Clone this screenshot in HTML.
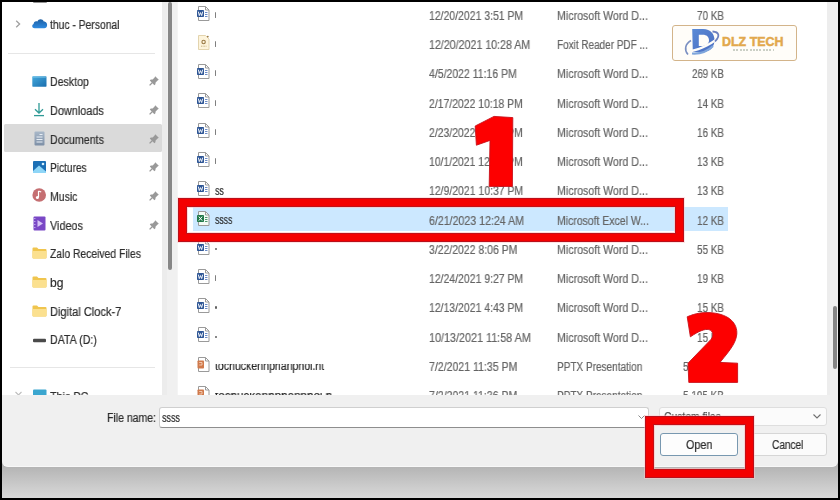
<!DOCTYPE html>
<html><head><meta charset="utf-8"><style>
html,body{margin:0;padding:0;}
body{width:840px;height:500px;overflow:hidden;background:#000;position:relative;font-family:"Liberation Sans",sans-serif;font-size:12px;color:#262626;}
.a{position:absolute;}
.t{position:absolute;white-space:nowrap;line-height:14px;height:14px;will-change:transform;-webkit-text-stroke:0.2px currentColor;}
.sep{position:absolute;height:1px;background:#e6e6e6;}
.redbox{position:absolute;border:7px solid #f40000;box-sizing:border-box;box-shadow:0 0 0 1px #b8101c,inset 0 0 0 1px #c01018,0 0 0 2px rgba(255,200,200,.5),inset 0 0 0 2px rgba(255,190,190,.6);}
</style></head><body>
<div class="a" style="left:2px;top:2px;width:836px;height:394px;background:#fff"></div>
<div class="a" style="left:162px;top:2px;width:16px;height:394px;background:linear-gradient(90deg,#ececec 0,#ececec 5px,#f0f0f0 5px,#f0f0f0 15px,#f8f8f8 16px)"></div>
<div class="a" style="left:168px;top:2px;width:4px;height:268px;background:#878787;border-radius:2px"></div>
<div class="a" style="left:827px;top:2px;width:11px;height:394px;background:linear-gradient(90deg,#ededed 0,#ededed 3px,#f0f0f0 3px)"></div>
<div class="a" style="left:833px;top:306px;width:4px;height:63px;background:#878787;border-radius:2px"></div>
<div class="a" style="left:4px;top:124px;width:157.5px;height:28px;background:#dadada;border-radius:1.5px"></div>
<div class="sep" style="left:8px;top:53px;width:147px"></div>
<div class="sep" style="left:10px;top:367px;width:145px"></div>
<svg class="a" style="left:14px;top:19px;" width="8" height="10" viewBox="0 0 8 10"><path d="M2.2 1.8 L5.6 5 L2.2 8.2" fill="none" stroke="#a0a0a0" stroke-width="1.3"/></svg>
<svg class="a" style="left:31px;top:17px;" width="17" height="13" viewBox="0 0 17 13"><defs><linearGradient id="cg" x1="0" y1="0" x2="0" y2="1"><stop offset="0" stop-color="#1c5fa3"/><stop offset="1" stop-color="#2e8ae0"/></linearGradient></defs><path d="M3.6 11.2 C1 11.2 0.4 8 2.6 7 C2.6 4.6 4.6 3.6 6.4 4.4 C7.6 1.6 11.6 1.4 12.8 4.6 C15.2 4.6 16.6 6.8 16 9 C15.6 10.5 14.6 11.2 13.4 11.2 Z" fill="url(#cg)"/></svg>
<div class="t" style="top:17.50px;font-size:12px;left:49.60px;transform:scaleX(0.8618);transform-origin:0 50%;color:#2e2e2e;">thuc - Personal</div>
<div class="t" style="top:74.50px;font-size:12px;left:50.30px;transform:scaleX(0.883);transform-origin:0 50%;color:#2e2e2e;">Desktop</div>
<svg class="a" style="left:148px;top:75px;" width="12" height="12" viewBox="0 0 12 12"><path d="M7.2 1.2 L10.8 4.8 L9.6 5.4 L7.6 7.4 L7.4 9.2 L6.4 10.2 L1.8 5.6 L2.8 4.6 L4.6 4.4 L6.6 2.4 Z" fill="#999"/><path d="M4.2 7.8 L1.6 10.4" stroke="#999" stroke-width="1.3"/></svg>
<div class="t" style="top:103.50px;font-size:12px;left:50.00px;transform:scaleX(0.9074);transform-origin:0 50%;color:#2e2e2e;">Downloads</div>
<svg class="a" style="left:148px;top:104px;" width="12" height="12" viewBox="0 0 12 12"><path d="M7.2 1.2 L10.8 4.8 L9.6 5.4 L7.6 7.4 L7.4 9.2 L6.4 10.2 L1.8 5.6 L2.8 4.6 L4.6 4.4 L6.6 2.4 Z" fill="#999"/><path d="M4.2 7.8 L1.6 10.4" stroke="#999" stroke-width="1.3"/></svg>
<div class="t" style="top:132.50px;font-size:12px;left:50.00px;transform:scaleX(0.888);transform-origin:0 50%;color:#2e2e2e;">Documents</div>
<svg class="a" style="left:148px;top:133px;" width="12" height="12" viewBox="0 0 12 12"><path d="M7.2 1.2 L10.8 4.8 L9.6 5.4 L7.6 7.4 L7.4 9.2 L6.4 10.2 L1.8 5.6 L2.8 4.6 L4.6 4.4 L6.6 2.4 Z" fill="#999"/><path d="M4.2 7.8 L1.6 10.4" stroke="#999" stroke-width="1.3"/></svg>
<div class="t" style="top:160.50px;font-size:12px;left:50.00px;transform:scaleX(0.8453);transform-origin:0 50%;color:#2e2e2e;">Pictures</div>
<svg class="a" style="left:148px;top:161px;" width="12" height="12" viewBox="0 0 12 12"><path d="M7.2 1.2 L10.8 4.8 L9.6 5.4 L7.6 7.4 L7.4 9.2 L6.4 10.2 L1.8 5.6 L2.8 4.6 L4.6 4.4 L6.6 2.4 Z" fill="#999"/><path d="M4.2 7.8 L1.6 10.4" stroke="#999" stroke-width="1.3"/></svg>
<div class="t" style="top:189.50px;font-size:12px;left:50.00px;transform:scaleX(0.8754);transform-origin:0 50%;color:#2e2e2e;">Music</div>
<svg class="a" style="left:148px;top:190px;" width="12" height="12" viewBox="0 0 12 12"><path d="M7.2 1.2 L10.8 4.8 L9.6 5.4 L7.6 7.4 L7.4 9.2 L6.4 10.2 L1.8 5.6 L2.8 4.6 L4.6 4.4 L6.6 2.4 Z" fill="#999"/><path d="M4.2 7.8 L1.6 10.4" stroke="#999" stroke-width="1.3"/></svg>
<div class="t" style="top:218.50px;font-size:12px;left:50.00px;transform:scaleX(0.9014);transform-origin:0 50%;color:#2e2e2e;">Videos</div>
<svg class="a" style="left:148px;top:219px;" width="12" height="12" viewBox="0 0 12 12"><path d="M7.2 1.2 L10.8 4.8 L9.6 5.4 L7.6 7.4 L7.4 9.2 L6.4 10.2 L1.8 5.6 L2.8 4.6 L4.6 4.4 L6.6 2.4 Z" fill="#999"/><path d="M4.2 7.8 L1.6 10.4" stroke="#999" stroke-width="1.3"/></svg>
<div class="t" style="top:246.50px;font-size:12px;left:50.00px;transform:scaleX(0.8624);transform-origin:0 50%;color:#2e2e2e;">Zalo Received Files</div>
<div class="t" style="top:275.50px;font-size:12px;left:50.00px;transform:scaleX(1.0075);transform-origin:0 50%;color:#2e2e2e;">bg</div>
<div class="t" style="top:304.50px;font-size:12px;left:50.00px;transform:scaleX(0.9212);transform-origin:0 50%;color:#2e2e2e;">Digital Clock-7</div>
<div class="t" style="top:332.50px;font-size:12px;left:50.00px;transform:scaleX(0.8847);transform-origin:0 50%;color:#2e2e2e;">DATA (D:)</div>
<div class="t" style="top:390.00px;font-size:12px;left:50.00px;transform:scaleX(0.8993);transform-origin:0 50%;color:#2e2e2e;">This PC</div>
<div class="a" style="left:33px;top:2px;width:14px;height:1.2px;background:#777;border-radius:0 0 3px 3px;opacity:.8"></div>
<svg class="a" style="left:32px;top:76px;" width="15" height="11" viewBox="0 0 15 11"><defs><linearGradient id="dg" x1="0" y1="0" x2="1" y2="1"><stop offset="0" stop-color="#44a9dc"/><stop offset="1" stop-color="#1a6eae"/></linearGradient></defs><rect x="0.3" y="0.3" width="14.2" height="10.4" rx="0.6" fill="url(#dg)"/><path d="M0.8 1.2 H13.8" stroke="#7fcdf0" stroke-width="0.9" opacity=".8"/></svg>
<svg class="a" style="left:33px;top:102px;" width="12" height="15" viewBox="0 0 12 15"><path d="M6 1 V11 M2 7.2 L6 11 L10 7.2" fill="none" stroke="#2f9a96" stroke-width="1.3"/><path d="M1 13.6 H11" stroke="#2f9a96" stroke-width="1.3"/></svg>
<svg class="a" style="left:34px;top:131px;" width="11" height="15" viewBox="0 0 11 15"><defs><linearGradient id="og" x1="0" y1="0" x2="0" y2="1"><stop offset="0" stop-color="#a9b8c9"/><stop offset="1" stop-color="#7d8fa6"/></linearGradient></defs><rect x="0.5" y="0.5" width="10" height="14" rx="1" fill="url(#og)"/><path d="M2.5 6 H8.5 M2.5 8.5 H8.5 M2.5 11 H8.5" stroke="#e8eef5" stroke-width="1"/><path d="M5.5 3.5 H8.5" stroke="#e8eef5" stroke-width="1"/></svg>
<svg class="a" style="left:33px;top:161px;" width="13" height="12" viewBox="0 0 13 12"><rect x="0" y="0" width="13" height="12" rx="1" fill="#1b6fb5"/><path d="M0 12 L0 10 L6 4.5 L13 10.5 L13 12 Z" fill="#8fd6f7"/><circle cx="10" cy="3" r="1.3" fill="#d8f2ff"/></svg>
<svg class="a" style="left:32px;top:188px;" width="15" height="14" viewBox="0 0 15 14"><circle cx="7.2" cy="7" r="6.8" fill="#c56f72"/><path d="M6.5 3 V9.3" stroke="#fff" stroke-width="1.2"/><circle cx="5.4" cy="9.4" r="1.5" fill="#fff"/><path d="M6.5 3 L9.2 4" stroke="#fff" stroke-width="1.2"/></svg>
<svg class="a" style="left:33px;top:216px;" width="13" height="15" viewBox="0 0 13 15"><rect x="0.5" y="0.5" width="12" height="14" rx="1" fill="#7a48c6"/><path d="M0.5 2.5 H2.5 M0.5 5.5 H2.5 M0.5 8.5 H2.5 M0.5 11.5 H2.5" stroke="#b9a0e8" stroke-width="1"/><path d="M4.5 4 L10 7.5 L4.5 11 Z" fill="#d6c4f6"/></svg>
<svg class="a" style="left:32px;top:247px;" width="15" height="12" viewBox="0 0 15 12"><path d="M0.5 1.5 Q0.5 0.5 1.5 0.5 H5 L6.5 2 H13.5 Q14.5 2 14.5 3 V10.5 Q14.5 11.5 13.5 11.5 H1.5 Q0.5 11.5 0.5 10.5 Z" fill="#f0c54e"/><path d="M0.5 4 H14.5 V10.5 Q14.5 11.5 13.5 11.5 H1.5 Q0.5 11.5 0.5 10.5 Z" fill="#fbe08f"/></svg>
<svg class="a" style="left:32px;top:276px;" width="15" height="12" viewBox="0 0 15 12"><path d="M0.5 1.5 Q0.5 0.5 1.5 0.5 H5 L6.5 2 H13.5 Q14.5 2 14.5 3 V10.5 Q14.5 11.5 13.5 11.5 H1.5 Q0.5 11.5 0.5 10.5 Z" fill="#f0c54e"/><path d="M0.5 4 H14.5 V10.5 Q14.5 11.5 13.5 11.5 H1.5 Q0.5 11.5 0.5 10.5 Z" fill="#fbe08f"/></svg>
<svg class="a" style="left:32px;top:305px;" width="15" height="12" viewBox="0 0 15 12"><path d="M0.5 1.5 Q0.5 0.5 1.5 0.5 H5 L6.5 2 H13.5 Q14.5 2 14.5 3 V10.5 Q14.5 11.5 13.5 11.5 H1.5 Q0.5 11.5 0.5 10.5 Z" fill="#f0c54e"/><path d="M0.5 4 H14.5 V10.5 Q14.5 11.5 13.5 11.5 H1.5 Q0.5 11.5 0.5 10.5 Z" fill="#fbe08f"/></svg>
<svg class="a" style="left:33px;top:338px;" width="14" height="5" viewBox="0 0 14 5"><rect x="0" y="0.8" width="13" height="3.4" rx="1" fill="#4a4a4a"/></svg>
<svg class="a" style="left:14px;top:390px;" width="9" height="7" viewBox="0 0 9 7"><path d="M1.5 2 L4.5 5 L7.5 2" fill="none" stroke="#bdbdbd" stroke-width="1.1"/></svg>
<svg class="a" style="left:33px;top:389px;" width="14" height="8" viewBox="0 0 14 8"><rect x="0" y="0.5" width="13.5" height="7" rx="1" fill="#3ba6cf"/></svg>
<div class="a" style="left:193px;top:207px;width:535px;height:24px;background:#cce8ff"></div>
<svg class="a" style="left:196px;top:6px;" width="15" height="16" viewBox="0 0 15 16"><path d="M2.5 0.5 H9.5 L13 4 V14.5 H2.5 Z" fill="#fff" stroke="#9a9a9a" stroke-width="1"/><path d="M9.5 0.5 V4 H13" fill="none" stroke="#9a9a9a" stroke-width="1"/><rect x="1" y="4" width="7" height="7" rx="0.8" fill="#2d5595"/><path d="M2.3 5.6 L3.3 9.6 L4.5 6.6 L5.7 9.6 L6.7 5.6" fill="none" stroke="#fff" stroke-width="0.9"/><path d="M9 6.5 H11.5 M9 8.5 H11.5 M9 10.5 H11.5" stroke="#5b7fc0" stroke-width="0.9"/></svg>
<div class="a" style="left:215px;top:11.75px;width:1.3px;height:6px;background:#3a3a3a;border-radius:1px;opacity:.65"></div>
<div class="t" style="top:8.75px;font-size:12px;left:429.10px;transform:scaleX(0.8714);transform-origin:0 50%;color:#656565;">12/20/2021 3:51 PM</div>
<div class="t" style="top:8.75px;font-size:12px;left:557.10px;transform:scaleX(0.8868);transform-origin:0 50%;color:#656565;">Microsoft Word D...</div>
<div class="t" style="top:8.75px;font-size:12px;left:697.10px;transform:scaleX(0.8226);transform-origin:0 50%;color:#656565;">70 KB</div>
<svg class="a" style="left:196px;top:35px;" width="15" height="16" viewBox="0 0 15 16"><path d="M2.5 0.5 H9.5 L13 4 V14.5 H2.5 Z" fill="#fdf4dc" stroke="#e3d4ae" stroke-width="1"/><circle cx="7.6" cy="7" r="1.7" fill="none" stroke="#9a7a45" stroke-width="1.1"/><path d="M5 11.2 H10.5" stroke="#c2ab78" stroke-width="0.9" stroke-dasharray="1 0.6"/><circle cx="11.8" cy="1.6" r="0.9" fill="#9a7a45"/></svg>
<div class="a" style="left:215px;top:41.00px;width:1.3px;height:6px;background:#3a3a3a;border-radius:1px;opacity:.65"></div>
<div class="t" style="top:38.00px;font-size:12px;left:429.10px;transform:scaleX(0.8878);transform-origin:0 50%;color:#656565;">12/20/2021 10:28 AM</div>
<div class="t" style="top:38.00px;font-size:12px;left:557.10px;transform:scaleX(0.83);transform-origin:0 50%;color:#656565;">Foxit Reader PDF ...</div>
<svg class="a" style="left:196px;top:64px;" width="15" height="16" viewBox="0 0 15 16"><path d="M2.5 0.5 H9.5 L13 4 V14.5 H2.5 Z" fill="#fff" stroke="#9a9a9a" stroke-width="1"/><path d="M9.5 0.5 V4 H13" fill="none" stroke="#9a9a9a" stroke-width="1"/><rect x="1" y="4" width="7" height="7" rx="0.8" fill="#2d5595"/><path d="M2.3 5.6 L3.3 9.6 L4.5 6.6 L5.7 9.6 L6.7 5.6" fill="none" stroke="#fff" stroke-width="0.9"/><path d="M9 6.5 H11.5 M9 8.5 H11.5 M9 10.5 H11.5" stroke="#5b7fc0" stroke-width="0.9"/></svg>
<div class="a" style="left:215px;top:70.25px;width:1.3px;height:6px;background:#3a3a3a;border-radius:1px;opacity:.65"></div>
<div class="t" style="top:67.25px;font-size:12px;left:429.10px;transform:scaleX(0.8736);transform-origin:0 50%;color:#656565;">4/5/2022 11:16 PM</div>
<div class="t" style="top:67.25px;font-size:12px;left:557.10px;transform:scaleX(0.8868);transform-origin:0 50%;color:#656565;">Microsoft Word D...</div>
<div class="t" style="top:67.25px;font-size:12px;left:692.10px;transform:scaleX(0.8096);transform-origin:0 50%;color:#656565;">269 KB</div>
<svg class="a" style="left:196px;top:93px;" width="15" height="16" viewBox="0 0 15 16"><path d="M2.5 0.5 H9.5 L13 4 V14.5 H2.5 Z" fill="#fff" stroke="#9a9a9a" stroke-width="1"/><path d="M9.5 0.5 V4 H13" fill="none" stroke="#9a9a9a" stroke-width="1"/><rect x="1" y="4" width="7" height="7" rx="0.8" fill="#2d5595"/><path d="M2.3 5.6 L3.3 9.6 L4.5 6.6 L5.7 9.6 L6.7 5.6" fill="none" stroke="#fff" stroke-width="0.9"/><path d="M9 6.5 H11.5 M9 8.5 H11.5 M9 10.5 H11.5" stroke="#5b7fc0" stroke-width="0.9"/></svg>
<div class="a" style="left:215px;top:99.50px;width:1.3px;height:6px;background:#3a3a3a;border-radius:1px;opacity:.65"></div>
<div class="t" style="top:96.50px;font-size:12px;left:429.10px;transform:scaleX(0.8677);transform-origin:0 50%;color:#656565;">2/17/2022 10:18 PM</div>
<div class="t" style="top:96.50px;font-size:12px;left:557.10px;transform:scaleX(0.8868);transform-origin:0 50%;color:#656565;">Microsoft Word D...</div>
<div class="t" style="top:96.50px;font-size:12px;left:697.10px;transform:scaleX(0.8226);transform-origin:0 50%;color:#656565;">14 KB</div>
<svg class="a" style="left:196px;top:123px;" width="15" height="16" viewBox="0 0 15 16"><path d="M2.5 0.5 H9.5 L13 4 V14.5 H2.5 Z" fill="#fff" stroke="#9a9a9a" stroke-width="1"/><path d="M9.5 0.5 V4 H13" fill="none" stroke="#9a9a9a" stroke-width="1"/><rect x="1" y="4" width="7" height="7" rx="0.8" fill="#2d5595"/><path d="M2.3 5.6 L3.3 9.6 L4.5 6.6 L5.7 9.6 L6.7 5.6" fill="none" stroke="#fff" stroke-width="0.9"/><path d="M9 6.5 H11.5 M9 8.5 H11.5 M9 10.5 H11.5" stroke="#5b7fc0" stroke-width="0.9"/></svg>
<div class="a" style="left:215px;top:128.75px;width:1.3px;height:6px;background:#3a3a3a;border-radius:1px;opacity:.65"></div>
<div class="t" style="top:125.75px;font-size:12px;left:429.10px;transform:scaleX(0.8677);transform-origin:0 50%;color:#656565;">2/23/2022 12:14 PM</div>
<div class="t" style="top:125.75px;font-size:12px;left:557.10px;transform:scaleX(0.8868);transform-origin:0 50%;color:#656565;">Microsoft Word D...</div>
<div class="t" style="top:125.75px;font-size:12px;left:697.10px;transform:scaleX(0.8226);transform-origin:0 50%;color:#656565;">16 KB</div>
<svg class="a" style="left:196px;top:152px;" width="15" height="16" viewBox="0 0 15 16"><path d="M2.5 0.5 H9.5 L13 4 V14.5 H2.5 Z" fill="#fff" stroke="#9a9a9a" stroke-width="1"/><path d="M9.5 0.5 V4 H13" fill="none" stroke="#9a9a9a" stroke-width="1"/><rect x="1" y="4" width="7" height="7" rx="0.8" fill="#2d5595"/><path d="M2.3 5.6 L3.3 9.6 L4.5 6.6 L5.7 9.6 L6.7 5.6" fill="none" stroke="#fff" stroke-width="0.9"/><path d="M9 6.5 H11.5 M9 8.5 H11.5 M9 10.5 H11.5" stroke="#5b7fc0" stroke-width="0.9"/></svg>
<div class="a" style="left:215px;top:158.00px;width:1.3px;height:6px;background:#3a3a3a;border-radius:1px;opacity:.65"></div>
<div class="t" style="top:155.00px;font-size:12px;left:429.10px;transform:scaleX(0.8677);transform-origin:0 50%;color:#656565;">10/1/2021 12:12 PM</div>
<div class="t" style="top:155.00px;font-size:12px;left:557.10px;transform:scaleX(0.8868);transform-origin:0 50%;color:#656565;">Microsoft Word D...</div>
<div class="t" style="top:155.00px;font-size:12px;left:697.10px;transform:scaleX(0.8226);transform-origin:0 50%;color:#656565;">13 KB</div>
<svg class="a" style="left:196px;top:181px;" width="15" height="16" viewBox="0 0 15 16"><path d="M2.5 0.5 H9.5 L13 4 V14.5 H2.5 Z" fill="#fff" stroke="#9a9a9a" stroke-width="1"/><path d="M9.5 0.5 V4 H13" fill="none" stroke="#9a9a9a" stroke-width="1"/><rect x="1" y="4" width="7" height="7" rx="0.8" fill="#2d5595"/><path d="M2.3 5.6 L3.3 9.6 L4.5 6.6 L5.7 9.6 L6.7 5.6" fill="none" stroke="#fff" stroke-width="0.9"/><path d="M9 6.5 H11.5 M9 8.5 H11.5 M9 10.5 H11.5" stroke="#5b7fc0" stroke-width="0.9"/></svg>
<div class="t" style="top:183.75px;font-size:12px;left:214.80px;transform:scaleX(0.7333);transform-origin:0 50%;color:#262626;">ss</div>
<div class="t" style="top:184.25px;font-size:12px;left:429.10px;transform:scaleX(0.8714);transform-origin:0 50%;color:#656565;">12/9/2021 10:37 PM</div>
<div class="t" style="top:184.25px;font-size:12px;left:557.10px;transform:scaleX(0.8868);transform-origin:0 50%;color:#656565;">Microsoft Word D...</div>
<div class="t" style="top:184.25px;font-size:12px;left:697.10px;transform:scaleX(0.8226);transform-origin:0 50%;color:#656565;">13 KB</div>
<svg class="a" style="left:196px;top:211px;" width="15" height="16" viewBox="0 0 15 16"><path d="M2.5 0.5 H9.5 L13 4 V14.5 H2.5 Z" fill="#f3fbf5" stroke="#9a9a9a" stroke-width="1"/><path d="M9.5 0.5 V4 H13" fill="none" stroke="#9a9a9a" stroke-width="1"/><rect x="1" y="4" width="7" height="7" rx="0.8" fill="#21794a"/><path d="M2.8 5.6 L6.2 9.6 M6.2 5.6 L2.8 9.6" stroke="#fff" stroke-width="1"/><path d="M9 6.5 H11.5 M9 8.5 H11.5 M9 10.5 H11.5" stroke="#3d8a5e" stroke-width="0.9"/></svg>
<div class="t" style="top:213.00px;font-size:12px;left:214.80px;transform:scaleX(0.7208);transform-origin:0 50%;color:#262626;">ssss</div>
<div class="t" style="top:213.50px;font-size:12px;left:429.10px;transform:scaleX(0.8836);transform-origin:0 50%;color:#656565;">6/21/2023 12:24 AM</div>
<div class="t" style="top:213.50px;font-size:12px;left:557.10px;transform:scaleX(0.8719);transform-origin:0 50%;color:#656565;">Microsoft Excel W...</div>
<div class="t" style="top:213.50px;font-size:12px;left:697.10px;transform:scaleX(0.8226);transform-origin:0 50%;color:#656565;">12 KB</div>
<svg class="a" style="left:196px;top:240px;" width="15" height="16" viewBox="0 0 15 16"><path d="M2.5 0.5 H9.5 L13 4 V14.5 H2.5 Z" fill="#fff" stroke="#9a9a9a" stroke-width="1"/><path d="M9.5 0.5 V4 H13" fill="none" stroke="#9a9a9a" stroke-width="1"/><rect x="1" y="4" width="7" height="7" rx="0.8" fill="#2d5595"/><path d="M2.3 5.6 L3.3 9.6 L4.5 6.6 L5.7 9.6 L6.7 5.6" fill="none" stroke="#fff" stroke-width="0.9"/><path d="M9 6.5 H11.5 M9 8.5 H11.5 M9 10.5 H11.5" stroke="#5b7fc0" stroke-width="0.9"/></svg>
<div class="a" style="left:215px;top:247.75px;width:1.5px;height:2.5px;background:#3a3a3a;border-radius:1px;opacity:.8"></div>
<div class="t" style="top:242.75px;font-size:12px;left:429.10px;transform:scaleX(0.8708);transform-origin:0 50%;color:#656565;">3/22/2022 8:06 PM</div>
<div class="t" style="top:242.75px;font-size:12px;left:557.10px;transform:scaleX(0.8868);transform-origin:0 50%;color:#656565;">Microsoft Word D...</div>
<div class="t" style="top:242.75px;font-size:12px;left:697.10px;transform:scaleX(0.8226);transform-origin:0 50%;color:#656565;">55 KB</div>
<svg class="a" style="left:196px;top:269px;" width="15" height="16" viewBox="0 0 15 16"><path d="M2.5 0.5 H9.5 L13 4 V14.5 H2.5 Z" fill="#fff" stroke="#9a9a9a" stroke-width="1"/><path d="M9.5 0.5 V4 H13" fill="none" stroke="#9a9a9a" stroke-width="1"/><rect x="1" y="4" width="7" height="7" rx="0.8" fill="#2d5595"/><path d="M2.3 5.6 L3.3 9.6 L4.5 6.6 L5.7 9.6 L6.7 5.6" fill="none" stroke="#fff" stroke-width="0.9"/><path d="M9 6.5 H11.5 M9 8.5 H11.5 M9 10.5 H11.5" stroke="#5b7fc0" stroke-width="0.9"/></svg>
<div class="a" style="left:215px;top:275.00px;width:1.3px;height:6px;background:#3a3a3a;border-radius:1px;opacity:.65"></div>
<div class="t" style="top:272.00px;font-size:12px;left:429.10px;transform:scaleX(0.8714);transform-origin:0 50%;color:#656565;">12/24/2021 9:27 PM</div>
<div class="t" style="top:272.00px;font-size:12px;left:557.10px;transform:scaleX(0.8868);transform-origin:0 50%;color:#656565;">Microsoft Word D...</div>
<div class="t" style="top:272.00px;font-size:12px;left:697.10px;transform:scaleX(0.8226);transform-origin:0 50%;color:#656565;">19 KB</div>
<svg class="a" style="left:196px;top:298px;" width="15" height="16" viewBox="0 0 15 16"><path d="M2.5 0.5 H9.5 L13 4 V14.5 H2.5 Z" fill="#fff" stroke="#9a9a9a" stroke-width="1"/><path d="M9.5 0.5 V4 H13" fill="none" stroke="#9a9a9a" stroke-width="1"/><rect x="1" y="4" width="7" height="7" rx="0.8" fill="#2d5595"/><path d="M2.3 5.6 L3.3 9.6 L4.5 6.6 L5.7 9.6 L6.7 5.6" fill="none" stroke="#fff" stroke-width="0.9"/><path d="M9 6.5 H11.5 M9 8.5 H11.5 M9 10.5 H11.5" stroke="#5b7fc0" stroke-width="0.9"/></svg>
<div class="a" style="left:215px;top:306.25px;width:1.5px;height:2.5px;background:#3a3a3a;border-radius:1px;opacity:.8"></div>
<div class="t" style="top:301.25px;font-size:12px;left:429.10px;transform:scaleX(0.8714);transform-origin:0 50%;color:#656565;">12/13/2021 4:43 PM</div>
<div class="t" style="top:301.25px;font-size:12px;left:557.10px;transform:scaleX(0.8868);transform-origin:0 50%;color:#656565;">Microsoft Word D...</div>
<div class="t" style="top:301.25px;font-size:12px;left:697.10px;transform:scaleX(0.8226);transform-origin:0 50%;color:#656565;">15 KB</div>
<svg class="a" style="left:196px;top:327px;" width="15" height="16" viewBox="0 0 15 16"><path d="M2.5 0.5 H9.5 L13 4 V14.5 H2.5 Z" fill="#fff" stroke="#9a9a9a" stroke-width="1"/><path d="M9.5 0.5 V4 H13" fill="none" stroke="#9a9a9a" stroke-width="1"/><rect x="1" y="4" width="7" height="7" rx="0.8" fill="#2d5595"/><path d="M2.3 5.6 L3.3 9.6 L4.5 6.6 L5.7 9.6 L6.7 5.6" fill="none" stroke="#fff" stroke-width="0.9"/><path d="M9 6.5 H11.5 M9 8.5 H11.5 M9 10.5 H11.5" stroke="#5b7fc0" stroke-width="0.9"/></svg>
<div class="a" style="left:215px;top:335.50px;width:1.5px;height:2.5px;background:#3a3a3a;border-radius:1px;opacity:.8"></div>
<div class="t" style="top:330.50px;font-size:12px;left:429.10px;transform:scaleX(0.8993);transform-origin:0 50%;color:#656565;">10/13/2021 11:58 AM</div>
<div class="t" style="top:330.50px;font-size:12px;left:557.10px;transform:scaleX(0.8868);transform-origin:0 50%;color:#656565;">Microsoft Word D...</div>
<div class="t" style="top:330.50px;font-size:12px;left:697.10px;transform:scaleX(0.8226);transform-origin:0 50%;color:#656565;">15 KB</div>
<svg class="a" style="left:196px;top:357px;" width="15" height="16" viewBox="0 0 15 16"><path d="M2.5 0.5 H9.5 L13 4 V14.5 H2.5 Z" fill="#fff" stroke="#9a9a9a" stroke-width="1"/><path d="M9.5 0.5 V4 H13" fill="none" stroke="#9a9a9a" stroke-width="1"/><rect x="1.5" y="3.5" width="6.5" height="8" rx="0.8" fill="#d07a4c"/><path d="M3.2 5.5 H6 V8 H3.2" fill="none" stroke="#f5d0b8" stroke-width="0.9"/></svg>
<div class="t" style="top:359.25px;font-size:12px;left:214.80px;transform:scaleX(0.8799);transform-origin:0 50%;color:#262626;">tochuckenhphanphoi.ht</div>
<div class="t" style="top:359.75px;font-size:12px;left:429.10px;transform:scaleX(0.8796);transform-origin:0 50%;color:#656565;">7/2/2021 11:35 PM</div>
<div class="t" style="top:359.75px;font-size:12px;left:557.10px;transform:scaleX(0.8355);transform-origin:0 50%;color:#656565;">PPTX Presentation</div>
<div class="t" style="top:359.75px;font-size:12px;left:683.10px;transform:scaleX(0.8279);transform-origin:0 50%;color:#656565;">5,195 KB</div>
<svg class="a" style="left:196px;top:386px;" width="15" height="16" viewBox="0 0 15 16"><path d="M2.5 0.5 H9.5 L13 4 V14.5 H2.5 Z" fill="#fff" stroke="#9a9a9a" stroke-width="1"/><path d="M9.5 0.5 V4 H13" fill="none" stroke="#9a9a9a" stroke-width="1"/><rect x="1.5" y="3.5" width="6.5" height="8" rx="0.8" fill="#d07a4c"/><path d="M3.2 5.5 H6 V8 H3.2" fill="none" stroke="#f5d0b8" stroke-width="0.9"/></svg>
<div class="t" style="top:388.50px;font-size:12px;left:214.80px;transform:scaleX(0.9702);transform-origin:0 50%;color:#262626;">tochuckenhphanphoi.h.........</div>
<div class="t" style="top:389.00px;font-size:12px;left:429.10px;transform:scaleX(0.8786);transform-origin:0 50%;color:#656565;">7/2/2021 11:36 PM</div>
<div class="t" style="top:389.00px;font-size:12px;left:557.10px;transform:scaleX(0.8355);transform-origin:0 50%;color:#656565;">PPTX Presentation</div>
<div class="t" style="top:389.00px;font-size:12px;left:683.10px;transform:scaleX(0.8279);transform-origin:0 50%;color:#656565;">5,195 KB</div>
<div class="a" style="left:214px;top:357px;width:120px;height:7.3px;background:#fff"></div>
<div class="a" style="left:214px;top:385px;width:150px;height:8.2px;background:#fff"></div>
<div class="a" style="left:2px;top:455px;width:836px;height:42.5px;background:linear-gradient(#b4b4b4 0,#b4b4b4 12px,#b6b6b6 13px,#d9d9d9)"></div>
<div class="a" style="left:2px;top:395px;width:836px;height:72px;background:#f0f0f0;border-bottom:1px solid #f8f8f8;box-sizing:border-box;border-radius:0 0 6px 6px"></div>
<div class="t" style="top:411.00px;font-size:12px;left:107.10px;transform:scaleX(0.875);transform-origin:0 50%;color:#2a2a2a;">File name:</div>
<div class="a" style="left:159px;top:407px;width:490px;height:21px;background:#fff;border:1px solid #cfcfcf;border-bottom:1px solid #8e8e8e;box-sizing:border-box;border-radius:3px"></div>
<div class="t" style="top:411.00px;font-size:12px;left:162.00px;transform:scaleX(0.7458);transform-origin:0 50%;color:#1e1e1e;">ssss</div>
<svg class="a" style="left:637px;top:413px;" width="10" height="8" viewBox="0 0 10 8"><path d="M1.5 2.5 L4.5 5.5 L7.5 2.5" fill="none" stroke="#8a8a8a" stroke-width="1"/></svg>
<div class="a" style="left:659px;top:407px;width:168px;height:19px;background:#fbfbfb;border:1px solid #dedede;box-sizing:border-box;border-radius:3px"></div>
<div class="t" style="top:410.00px;font-size:12px;left:663.60px;transform:scaleX(0.8606);transform-origin:0 50%;color:#4a4a4a;">Custom files</div>
<svg class="a" style="left:812px;top:412px;" width="10" height="8" viewBox="0 0 10 8"><path d="M1.5 2.5 L5 6 L8.5 2.5" fill="none" stroke="#707070" stroke-width="1.1"/></svg>
<div class="a" style="left:660px;top:433px;width:78px;height:23px;background:#fdfdfd;border:1px solid #7898b0;box-sizing:border-box;border-radius:3px"></div>
<div class="t" style="top:438.00px;font-size:12px;left:685.90px;transform:scaleX(0.898);transform-origin:0 50%;color:#2a2a2a;">Open</div>
<div class="a" style="left:748px;top:433px;width:79px;height:23px;background:#fbfbfb;border:1px solid #d6d6d6;box-sizing:border-box;border-radius:3px"></div>
<div class="t" style="top:438.00px;font-size:12px;left:772.30px;transform:scaleX(0.8396);transform-origin:0 50%;color:#2a2a2a;">Cancel</div>
<div class="redbox" style="left:179px;top:199px;width:504px;height:41.5px;border-top-width:7.5px"></div>
<div class="redbox" style="left:646px;top:417px;width:107px;height:60px"></div>
<svg class="a" style="left:470px;top:110px;" width="50" height="82" viewBox="0 0 50 82"><path d="M5.2 16 L24 6.4 L42.8 7.6 L42.4 76.4 L19.2 76.4 L20 30.4 L6.4 35.2 Z" fill="#fd0000" stroke="#c8101a" stroke-width="0.9" stroke-linejoin="round"/></svg>
<svg class="a" style="left:680px;top:308px;" width="66" height="80" viewBox="0 0 66 80"><path d="M7.2 8.8 C16 5 24 4 32 4.8 C50 6.5 57.5 16 56.8 26 C56 34 52 40 40 54.4 L57.6 55.2 L57.6 74.4 L8.8 74.4 L8 55.2 L31.2 31.2 C34 27.5 33 22.5 28.8 21.6 C24.5 20.8 19 23 10.4 28.8 Z" fill="#fd0000" stroke="#c8101a" stroke-width="0.9" stroke-linejoin="round"/></svg>
<div class="a" style="left:672px;top:25px;width:125px;height:35.5px;box-sizing:border-box;border:1.8px solid #d3b48a;border-radius:3px;background:#fffdf9"></div>
<svg class="a" style="left:678px;top:24px;" width="46" height="36" viewBox="0 0 46 36"><defs><linearGradient id="lg" x1="0" y1="0" x2="1" y2="1"><stop offset="0" stop-color="#5a8ad6"/><stop offset="1" stop-color="#4a6cc0"/></linearGradient></defs><path d="M14.2 5 H25 C33 5 36.5 10.5 36.5 16 C36.5 23 32 28 25 28 H14.8 Z M20.8 10.8 V22 H24.8 C28.6 22 31 19.6 31 16.3 C31 13 28.6 10.8 24.8 10.8 Z" fill="url(#lg)" fill-rule="evenodd"/><path d="M8 26.5 C19 25.5 31 20.5 41.5 11.5 L41.5 14.5 C31 23 19 28 8 29 Z" fill="#fffdf9"/><path d="M13 16.5 C7 20 6 26 10 30.5" fill="none" stroke="#7a8fc2" stroke-width="1.6"/><path d="M34.5 7.5 C41 8 42.5 11.5 37 17.5" fill="none" stroke="#6b7fbf" stroke-width="1.8"/><path d="M14 29.5 C22 30 30 27 35 22" fill="none" stroke="#7fa6dc" stroke-width="2.2"/></svg>
<div class="a" style="left:722px;top:34px;font-size:13.6px;line-height:16px;font-weight:bold;color:#e2a84c;-webkit-text-stroke:0.5px #e2a84c;white-space:nowrap;transform:scaleX(0.915);transform-origin:0 50%">DLZ TECH</div>
<div class="a" style="left:733px;top:49.3px;width:41px;height:2px;background:repeating-linear-gradient(90deg,#7d8c78 0 2px,transparent 2px 3.3px);opacity:.4"></div>
</body></html>
